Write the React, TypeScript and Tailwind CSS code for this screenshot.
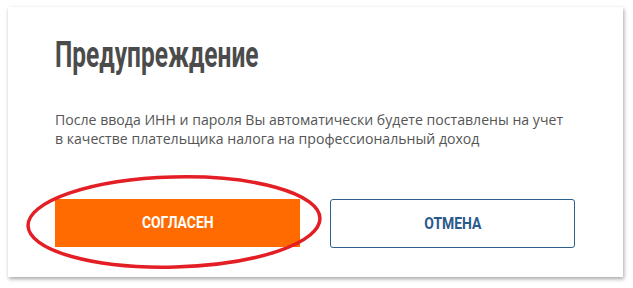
import React from "react";

export default function App() {
  return (
    <div className="w-[633px] h-[288px] bg-white relative overflow-hidden">
      <div className="absolute left-[8px] top-[7px] w-[615px] h-[270px] bg-white shadow-[1px_2px_4px_rgba(0,0,0,0.35)] pl-[47px] pt-[26px] flex flex-col">
        <h1
          className="text-[36px] leading-[44px] font-bold text-[#4b4b4b] origin-left scale-x-[0.68] whitespace-nowrap"
          style={{ fontFamily: "Roboto, 'DejaVu Sans', sans-serif" }}
        >
          Предупреждение
        </h1>
        <p
          className="mt-[33px] text-[14.1px] leading-[19px] text-[#555555] whitespace-nowrap"
          style={{ fontFamily: "'Open Sans', 'Noto Sans', sans-serif" }}
        >
          После ввода ИНН и пароля Вы автоматически будете поставлены на учет
          <br />
          в качестве плательщика налога на профессиональный доход
        </p>
        <div className="mt-[51px] flex gap-[30px]">
          <button className="w-[245px] h-[48px] bg-[#ff6b00] flex items-center justify-center">
            <span
              className="text-[17px] font-bold text-white scale-x-[0.82] inline-block"
              style={{ fontFamily: "Roboto, sans-serif" }}
            >
              СОГЛАСЕН
            </span>
          </button>
          <button className="w-[245px] h-[49px] bg-white border border-[#2d5f8e] rounded-[3px] flex items-center justify-center">
            <span
              className="text-[17px] font-bold text-[#2a5a8c] scale-x-[0.82] inline-block"
              style={{ fontFamily: "Roboto, sans-serif" }}
            >
              ОТМЕНА
            </span>
          </button>
        </div>
      </div>
      <svg className="absolute left-0 top-0 pointer-events-none" width="633" height="288">
        <ellipse cx="174" cy="222" rx="146" ry="45" fill="none" stroke="#e31e24" strokeWidth="3.5" transform="rotate(-1.5 174 222)" />
      </svg>
    </div>
  );
}
